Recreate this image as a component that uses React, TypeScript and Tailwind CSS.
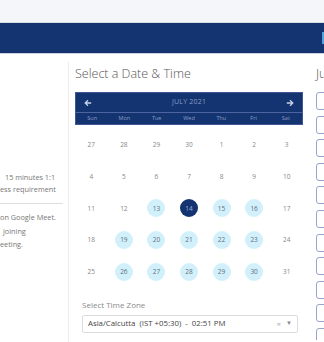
import React from "react";

const weeks: number[][] = [
  [27, 28, 29, 30, 1, 2, 3],
  [4, 5, 6, 7, 8, 9, 10],
  [11, 12, 13, 14, 15, 16, 17],
  [18, 19, 20, 21, 22, 23, 24],
  [25, 26, 27, 28, 29, 30, 31],
];

const dayNames = ["Sun", "Mon", "Tue", "Wed", "Thu", "Fri", "Sat"];

const available = new Set([13, 15, 16, 19, 20, 21, 22, 23, 26, 27, 28, 29, 30]);

const App: React.FC = () => {
  return (
    <div
      className="w-[324px] h-[342px] overflow-hidden bg-white"
      style={{ fontFamily: '"Open Sans", "Liberation Sans", sans-serif' }}
    >
      {/* Top bars */}
      <div className="h-[23px] bg-[#f5f6fa] border-b border-[#d9dde8]" />
      <div className="h-[31px] bg-[#133470] border-b border-[#c9cfdd] flex justify-end items-center">
        <div className="w-[2px] h-[12px] bg-[#4fa3df]" />
      </div>

      <div className="flex">
        {/* Left column */}
        <div className="w-[69px] shrink-0 mt-[8px] h-[280px] border-r border-[#ececec] overflow-hidden text-[7.3px] text-[#777] whitespace-nowrap">
          <div className="pt-[109px] leading-[12px]">
            <div className="pl-[5px]">15 minutes 1:1</div>
            <div>ess requirement</div>
          </div>
          <div className="mt-[8px] mb-[7px] w-[63px] h-px bg-[#dedede]" />
          <div className="leading-[13.5px]">
            <div>on Google Meet.</div>
            <div className="pl-[3px]">joining</div>
            <div>eeting.</div>
          </div>
        </div>

        {/* Middle column */}
        <div className="w-[240px] shrink-0 pl-[6px]">
          <h2 className="mt-[12px] h-[16px] text-[12.5px] leading-[16px] font-light text-[#555]">
            Select a Date &amp; Time
          </h2>

          <div className="mt-[10px] w-[228px]">
            <div className="bg-[#133470] border border-[#3f5894]">
              <div className="h-[20px] flex items-center justify-between px-[8px] border-b border-[#4d64a0]">
                <svg width="8" height="8" viewBox="0 0 10 10" fill="none" stroke="#c8d1ea" strokeWidth="1.6">
                  <path d="M9 5H1.5M5 1.5L1.5 5L5 8.5" />
                </svg>
                <span className="text-[7px] tracking-[0.2px] text-[#8b9cc6]">JULY 2021</span>
                <svg width="8" height="8" viewBox="0 0 10 10" fill="none" stroke="#c8d1ea" strokeWidth="1.6">
                  <path d="M1 5H8.5M5 1.5L8.5 5L5 8.5" />
                </svg>
              </div>
              <div className="grid grid-cols-7 h-[11px] items-center">
                {dayNames.map((d) => (
                  <span key={d} className="text-center text-[5.5px] text-[#8b9cc6]">
                    {d}
                  </span>
                ))}
              </div>
            </div>

            <div className="pt-[4px]">
              {weeks.map((week, wi) => (
                <div key={wi} className="grid grid-cols-7 h-[31.75px] items-center">
                  {week.map((d, di) => {
                    const isSel = wi === 2 && d === 14;
                    const isAvail = wi >= 2 && available.has(d);
                    return (
                      <div key={di} className="flex justify-center">
                        <span
                          className={
                            isSel
                              ? "w-[18px] h-[18px] rounded-full bg-[#133470] text-[#9fb2e0] flex items-center justify-center text-[6.5px]"
                              : isAvail
                              ? "w-[18px] h-[18px] rounded-full bg-[#d2f0fb] text-[#5f6f80] flex items-center justify-center text-[6.5px]"
                              : "w-[18px] h-[18px] flex items-center justify-center text-[6.5px] text-[#888]"
                          }
                        >
                          {d}
                        </span>
                      </div>
                    );
                  })}
                </div>
              ))}
            </div>

            <div className="ml-[7px] mt-[11px] text-[8px] leading-[12px] text-[#8a8a8a]">
              Select Time Zone
            </div>
            <div className="ml-[7px] mt-[4px] w-[216px] h-[18px] border border-[#dcdcdc] rounded-[2px] flex items-center px-[5px] text-[7.8px] text-[#444]">
              <span className="flex-1 whitespace-pre">Asia/Calcutta  (IST +05:30)  -  02:51 PM</span>
              <span className="text-[#aaa] text-[8px] mr-[5px]">×</span>
              <span className="text-[#888] text-[6px]">▼</span>
            </div>
          </div>
        </div>

        {/* Right column */}
        <div className="flex-1 pl-[7px] min-w-0 overflow-hidden">
          <div className="mt-[12px] h-[16px] text-[12.5px] leading-[16px] font-light text-[#555] whitespace-nowrap">
            Ju
          </div>
          <div className="mt-[10px] h-[248px] overflow-hidden flex flex-col gap-[5.6px]">
            {Array.from({ length: 11 }).map((_, i) => (
              <div
                key={i}
                className="h-[18px] w-[80px] shrink-0 border border-[#98a5c9] rounded-[3px]"
              />
            ))}
          </div>
        </div>
      </div>
    </div>
  );
};

export default App;
